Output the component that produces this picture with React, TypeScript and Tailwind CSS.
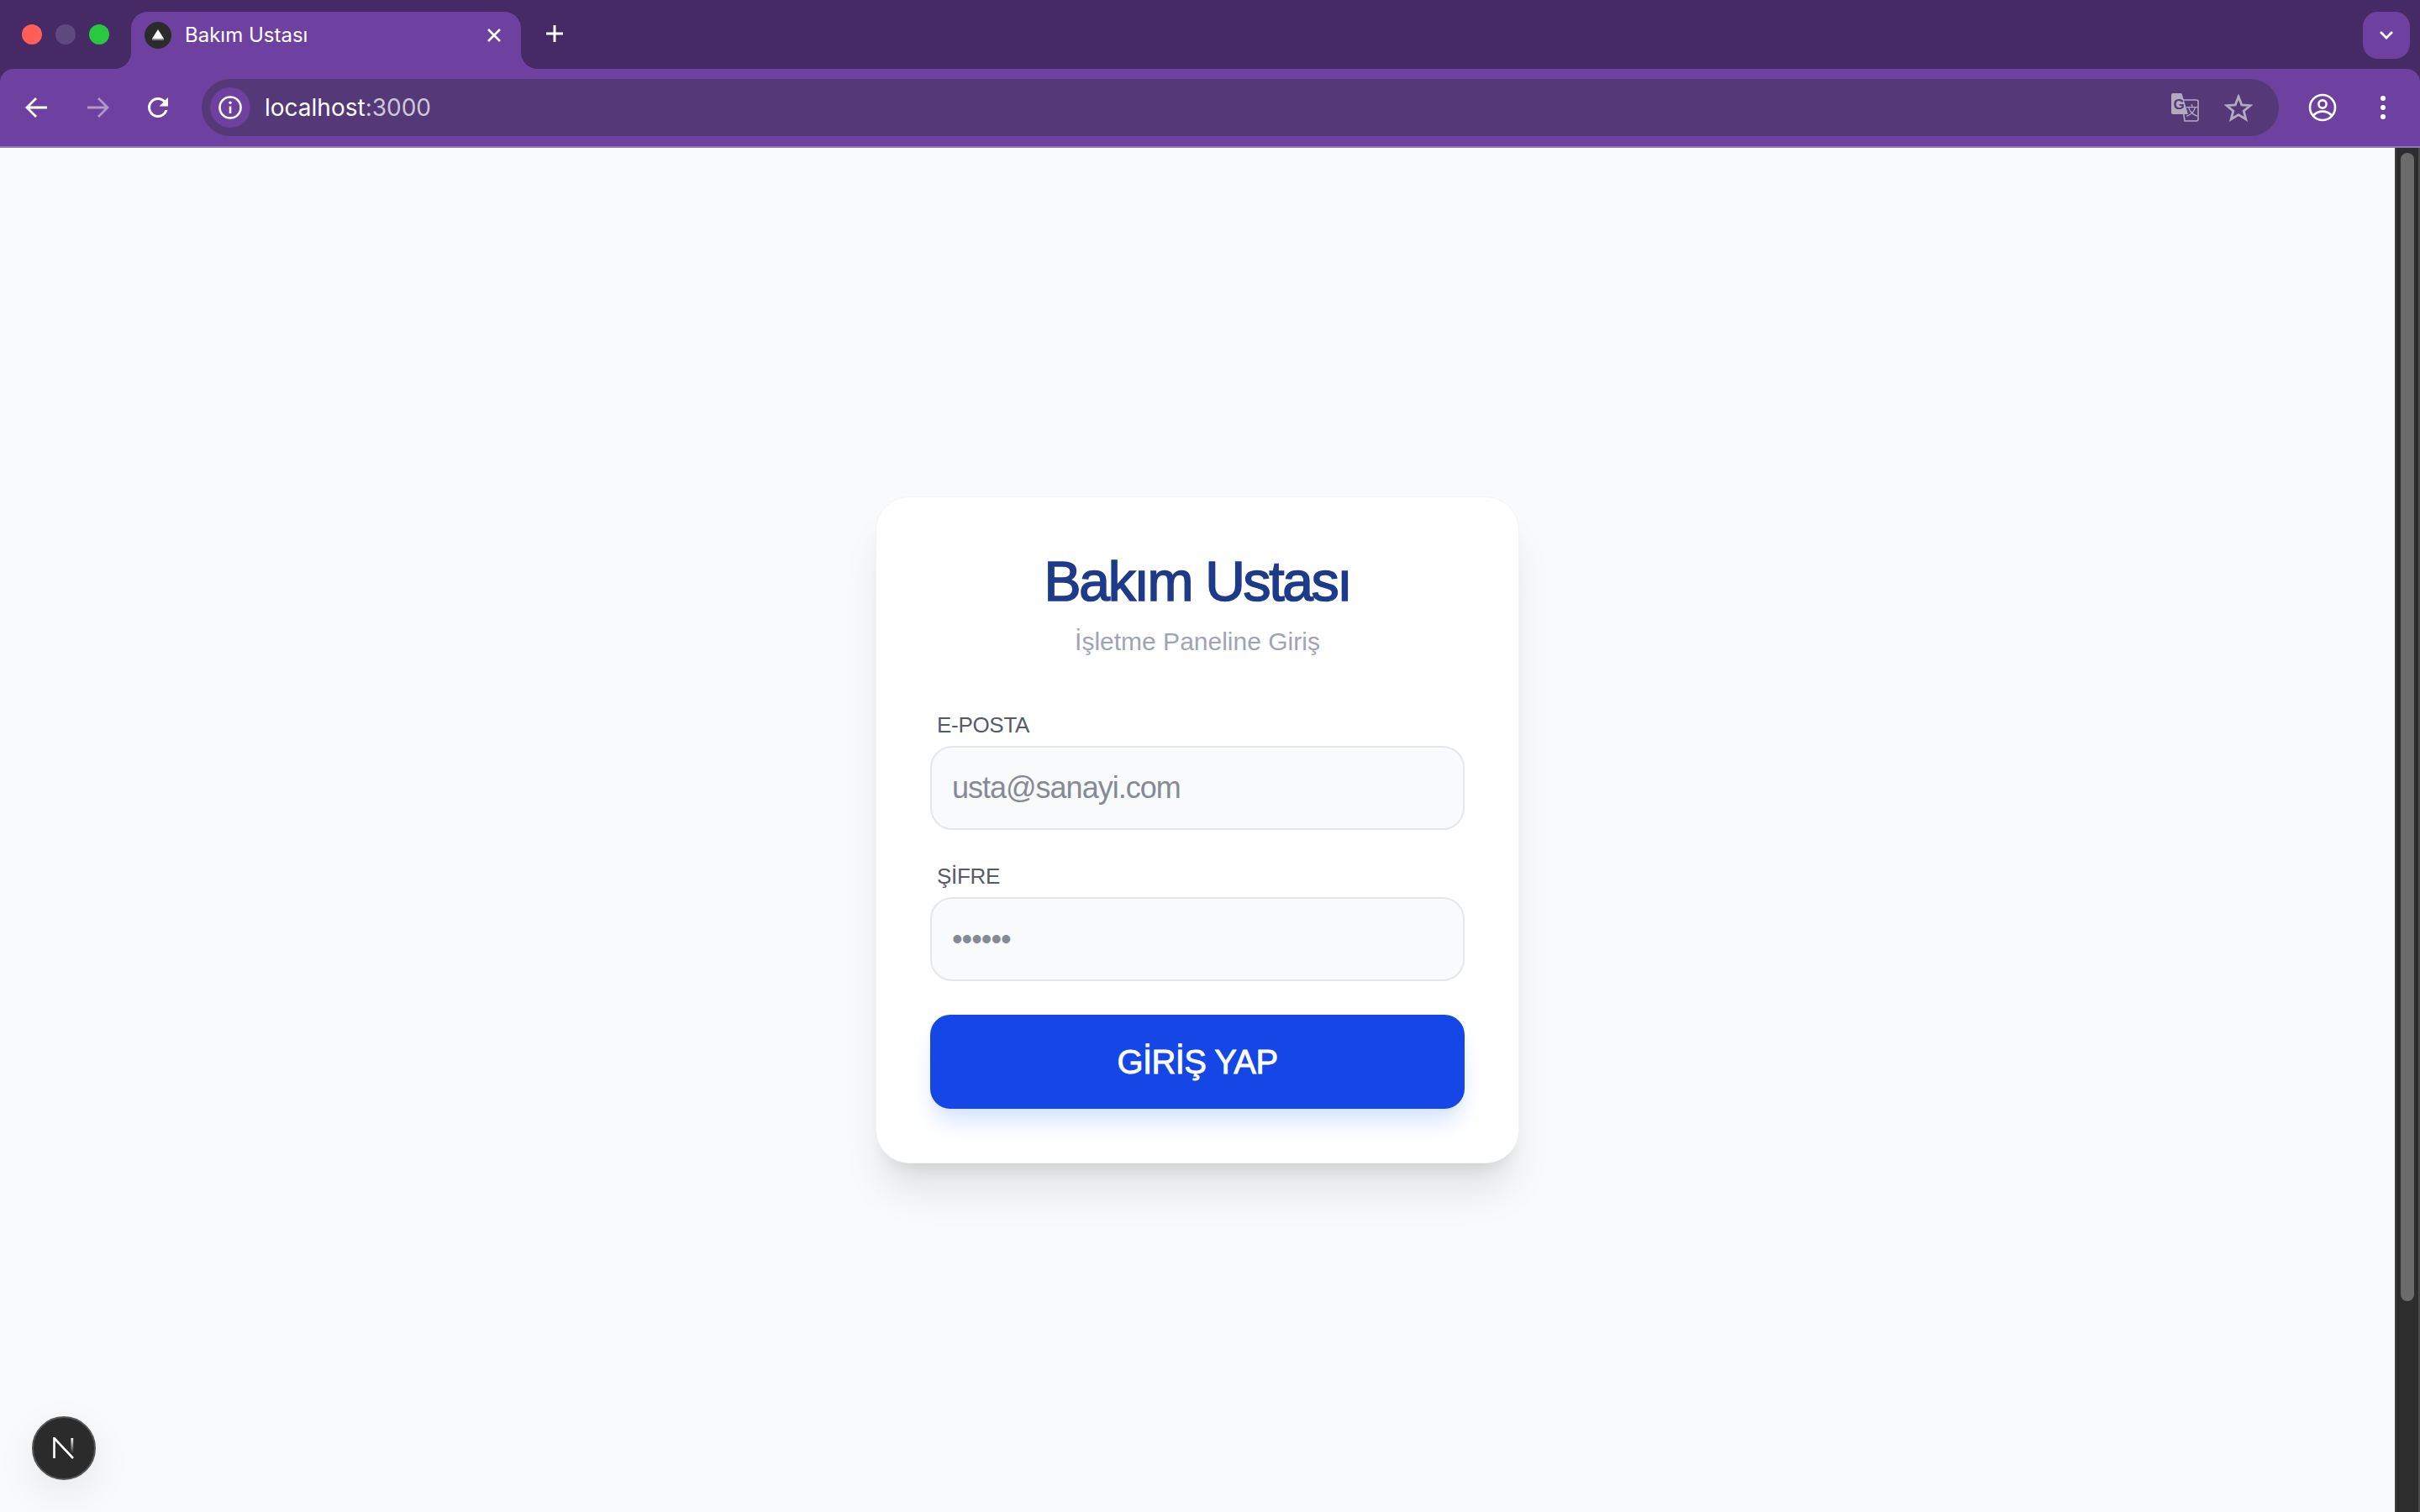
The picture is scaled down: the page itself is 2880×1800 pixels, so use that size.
import React from "react";

const sans = "font-['Liberation_Sans',Arial,sans-serif]";

function Flare({ side }: { side: "left" | "right" }) {
  return (
    <div className={`absolute bottom-0 h-[20px] w-[20px] bg-[#6e41a0] ${side === "left" ? "left-[-20px]" : "right-[-20px]"}`}>
      <div className={`h-full w-full bg-[#452a66] ${side === "left" ? "rounded-br-[20px]" : "rounded-bl-[20px]"}`} />
    </div>
  );
}

function TranslateIcon() {
  return (
    <svg width="34" height="36" viewBox="0 0 34 36" className="shrink-0">
      <path d="M13 9H31a2 2 0 0 1 2 2V32a2 2 0 0 1-2 2H17L13 9Z" fill="none" stroke="#b4aabf" strokeWidth="1.6" />
      <path d="M3 1H12a2 2 0 0 1 1.9 1.4L21 26H3a2 2 0 0 1-2-2V3a2 2 0 0 1 2-2Z" fill="#b4aabf" />
      <text x="3.5" y="20" fontSize="17" fontWeight="700" fill="#543877" fontFamily="Liberation Sans, sans-serif">G</text>
      <text x="18" y="27" fontSize="15" fill="#b4aabf" fontFamily="Noto Sans CJK SC, sans-serif">文</text>
    </svg>
  );
}

function Field({ label, placeholder, mb }: { label: string; placeholder: string; mb: string }) {
  return (
    <div className={mb}>
      <label className="mb-[9px] ml-2 block text-[26px] leading-[31px] tracking-[-0.3px] text-[#565b68]">{label}</label>
      <input
        type="text"
        readOnly
        placeholder={placeholder}
        className="block h-[100px] w-full rounded-[26px] border-2 border-[#e5e7eb] bg-[#f9fafb] px-[24px] text-[36px] tracking-[-1px] text-[#111827] outline-none placeholder:text-[#858a95]"
      />
    </div>
  );
}

export default function App() {
  return (
    <div className={`flex h-screen w-full flex-col overflow-hidden bg-[#452a66] ${sans}`}>
      {/* tab strip */}
      <div className="flex h-[82px] shrink-0 items-start bg-[#452a66]">
        <div className="flex h-[82px] w-[156px] shrink-0 items-center gap-4 pl-[26px]">
          <span className="h-6 w-6 rounded-full bg-[#ff5f57]" />
          <span className="h-6 w-6 rounded-full bg-[#5f4a80]" />
          <span className="h-6 w-6 rounded-full bg-[#28c840]" />
        </div>
        <div className="relative mt-[14px] flex h-[68px] w-[464px] shrink-0 items-start rounded-t-[20px] bg-[#6e41a0] pl-4 pr-[23px] pt-3">
          <Flare side="left" />
          <Flare side="right" />
          <span className="flex h-8 w-8 shrink-0 items-center justify-center rounded-full bg-[#2b2b2b]">
            <svg width="16" height="14" viewBox="0 0 16 14">
              <path d="M8 0L15 11H1Z" fill="#fff" />
              <rect x="1" y="11" width="14" height="2" fill="#8a8a8a" />
            </svg>
          </span>
          <span className="ml-[16px] flex-1 font-['Inter',sans-serif] text-[24px] leading-[32px] text-white">Bakım Ustası</span>
          <svg width="18" height="18" viewBox="0 0 18 18" className="mt-[7px]">
            <path d="M2 2L16 16M16 2L2 16" stroke="#fff" strokeWidth="2.6" />
          </svg>
        </div>
        <svg width="24" height="24" viewBox="0 0 24 24" className="ml-[28px] mt-[28px] shrink-0">
          <path d="M12 2V22M2 12H22" stroke="#fff" strokeWidth="3" />
        </svg>
        <div className="flex-1" />
        <div className="mr-3 mt-[14px] flex h-14 w-14 shrink-0 items-center justify-center rounded-[18px] bg-[#6e41a0]">
          <svg width="18" height="12" viewBox="0 0 18 12">
            <path d="M2 2L9 9L16 2" fill="none" stroke="#fff" strokeWidth="2.8" />
          </svg>
        </div>
      </div>

      {/* toolbar */}
      <div className="flex h-[94px] shrink-0 items-center rounded-t-[16px] border-b-2 border-[#9173b6] bg-[#6e41a0]">
        <div className="ml-7 flex w-[212px] shrink-0 items-center gap-[40px]">
          <svg width="32" height="32" viewBox="0 0 32 32" className="shrink-0">
            <path d="M28 16H5M15 5L4 16L15 27" fill="none" stroke="#fff" strokeWidth="2.8" />
          </svg>
          <svg width="32" height="32" viewBox="0 0 32 32" className="shrink-0 opacity-45">
            <path d="M4 16H27M17 5L28 16L17 27" fill="none" stroke="#fff" strokeWidth="2.8" />
          </svg>
          <svg width="36" height="36" viewBox="0 0 24 24" className="-mx-[2px] shrink-0">
            <path d="M17.65 6.35A7.96 7.96 0 0 0 12 4a8 8 0 1 0 7.73 10h-2.08A6 6 0 1 1 12 6c1.66 0 3.14.69 4.22 1.78L13 11h7V4l-2.35 2.35z" fill="#fff" />
          </svg>
        </div>
        <div className="flex h-[68px] flex-1 items-center rounded-full bg-[#543877] pl-[10px] pr-[31px]">
          <span className="flex h-12 w-12 shrink-0 items-center justify-center rounded-full bg-[#6e41a0]">
            <svg width="30" height="30" viewBox="0 0 30 30">
              <circle cx="15" cy="15" r="12.5" fill="none" stroke="#fff" strokeWidth="2.6" />
              <path d="M15 13.5V22" stroke="#fff" strokeWidth="2.6" />
              <circle cx="15" cy="9.2" r="1.7" fill="#fff" />
            </svg>
          </span>
          <span className="ml-[17px] flex-1 font-['Inter',sans-serif] text-[28px] leading-none text-white">
            localhost<span className="text-[#cfc6da]">:3000</span>
          </span>
          <TranslateIcon />
          <svg width="34" height="34" viewBox="0 0 34 34" className="ml-[30px] shrink-0">
            <path d="M17 4L20.8 13.8L31 14.6L23.2 21.2L25.8 31L17 25.6L8.2 31L10.8 21.2L3 14.6L13.2 13.8Z" fill="none" stroke="#b4aabf" strokeWidth="2.8" />
          </svg>
        </div>
        <svg width="34" height="34" viewBox="0 0 34 34" className="ml-[35px] shrink-0">
          <circle cx="17" cy="17" r="15" fill="none" stroke="#fff" strokeWidth="2.6" />
          <circle cx="17" cy="13" r="4.6" fill="none" stroke="#fff" strokeWidth="2.6" />
          <path d="M6.5 26C10 22.3 13.5 21.6 17 21.6S24 22.3 27.5 26" fill="none" stroke="#fff" strokeWidth="2.6" />
        </svg>
        <div className="ml-[52px] mr-[41px] flex shrink-0 flex-col gap-[5px]">
          <span className="h-[6px] w-[6px] rounded-full bg-white" />
          <span className="h-[6px] w-[6px] rounded-full bg-white" />
          <span className="h-[6px] w-[6px] rounded-full bg-white" />
        </div>
      </div>

      {/* page */}
      <div className="flex min-h-0 flex-1">
        <main className="relative flex flex-1 items-center justify-center bg-[#f9fafb]">
          <div className="w-[766px] rounded-[40px] border border-[#f3f4f6] bg-white p-16 shadow-[0_40px_50px_-10px_rgba(0,0,0,0.1),0_16px_20px_-12px_rgba(0,0,0,0.1)]">
            <div className="mb-16 text-center">
              <h1 className="text-[66px] font-normal leading-[72px] tracking-[-2.3px] text-[#1e3a8a] [-webkit-text-stroke:1.6px_#1e3a8a]">Bakım Ustası</h1>
              <p className="mt-4 text-[30px] leading-[40px] text-[#a0a3b8]">İşletme Paneline Giriş</p>
            </div>
            <Field label="E-POSTA" placeholder="usta@sanayi.com" mb="mb-10" />
            <Field label="ŞİFRE" placeholder="••••••" mb="mb-10" />
            <button className="block h-[112px] w-full rounded-[24px] bg-[#1447e6] text-[40px] tracking-[-0.6px] text-white shadow-[0_20px_30px_-6px_#d3e3ff,0_8px_12px_-8px_#d3e3ff] [-webkit-text-stroke:0.8px_#fff]">
              GİRİŞ YAP
            </button>
          </div>
          <div className="absolute bottom-[38px] left-[38px] flex h-[76px] w-[76px] items-center justify-center rounded-full border-2 border-[#555] bg-[#2b2b2b] shadow-[0_16px_48px_rgba(0,0,0,0.08)]">
            <svg width="26" height="26" viewBox="0 0 26 26">
              <defs>
                <linearGradient id="nbar" x1="0" y1="0" x2="0" y2="1">
                  <stop offset="0" stopColor="#fff" />
                  <stop offset="1" stopColor="#fff" stopOpacity="0" />
                </linearGradient>
              </defs>
              <path d="M1.5 25V1L24 25" fill="none" stroke="#fff" strokeWidth="2.6" />
              <rect x="21.4" y="1" width="2.8" height="18" fill="url(#nbar)" />
            </svg>
          </div>
        </main>
        <div className="flex w-[30px] shrink-0 justify-center border-l-2 border-r-2 border-l-[#3f3f3f] border-r-[#4a4a4a] bg-[#2d2d2d]">
          <div className="mt-[6px] h-[1367px] w-4 rounded-full bg-[#6b6b6b]" />
        </div>
      </div>
    </div>
  );
}
